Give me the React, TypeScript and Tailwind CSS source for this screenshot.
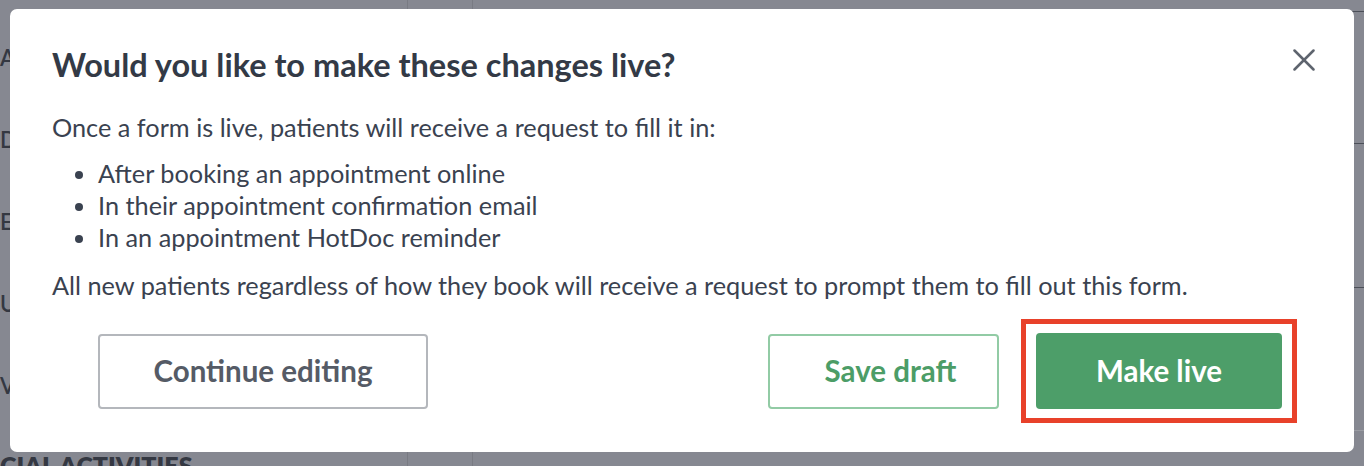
const sideLetters = ["A", "D", "E", "U", "V"];

export default function App() {
  return (
    <div
      className="relative w-[1364px] h-[466px] overflow-hidden bg-[#868891]"
      style={{ fontFamily: "Lato, 'Noto Sans', sans-serif" }}
    >
      {/* page behind the overlay */}
      <div className="flex h-full">
        <div className="flex flex-col w-[408px] border-r border-[#797b83]">
          <div className="flex flex-col gap-[62px] pt-[48px] text-[22px] font-semibold text-[#343842] leading-[20px]">
            {sideLetters.map((l) => (
              <div key={l}>{l}</div>
            ))}
          </div>
          <div className="mt-auto text-[25px] font-extrabold text-[#343842] leading-none translate-y-[12px]">
            CIAL ACTIVITIES
          </div>
        </div>
        <div className="w-[65px] border-r border-[#797b83]" />
        <div className="flex-1 flex flex-col pt-[11px]">
          <div className="h-[132px] border-t border-[#4b4f58]" />
          <div className="h-[144px] border-t border-[#4b4f58]" />
          <div className="h-[143px] border-t border-[#4b4f58]" />
          <div className="border-t border-[#9a9ca3]" />
        </div>
      </div>

      {/* modal */}
      <div className="absolute left-[10px] top-[9px] w-[1344px] h-[443px] bg-white rounded-[7px] pl-[42px] pr-[39px] pt-[36px]">
        <div className="flex items-start justify-between">
          <h2 className="text-[32.5px] leading-[40px] font-bold text-[#333a46]">
            Would you like to make these changes live?
          </h2>
          <button className="mt-[4px] text-[#5e646e]">
            <svg width="22" height="22" viewBox="0 0 22 22" fill="none" stroke="currentColor" strokeWidth="2.5" strokeLinecap="round">
              <line x1="1.5" y1="1.5" x2="20.5" y2="20.5" />
              <line x1="20.5" y1="1.5" x2="1.5" y2="20.5" />
            </svg>
          </button>
        </div>

        <div className="mt-[26px] text-[25.3px] leading-[32px] text-[#3a4250]">
          <p>Once a form is live, patients will receive a request to fill it in:</p>
          <ul className="mt-[14px] list-disc pl-[46px]">
            <li>After booking an appointment online</li>
            <li>In their appointment confirmation email</li>
            <li>In an appointment HotDoc reminder</li>
          </ul>
          <p className="mt-[16px]">
            All new patients regardless of how they book will receive a request to prompt them to fill out this form.
          </p>
        </div>

        <div className="flex items-center mt-[18px] pl-[46px] pr-[18px]">
          <button className="w-[330px] h-[75px] rounded-[4px] border-2 border-[#b4b7bc] text-[29.5px] font-bold text-[#555b66]">
            Continue editing
          </button>
          <button className="ml-auto w-[231px] h-[75px] pl-[14px] rounded-[4px] border-2 border-[#92cba5] text-[29.5px] font-bold text-[#4c9d67]">
            Save draft
          </button>
          <div className="ml-[22px] border-[5px] border-[#e8412a] px-[10px] py-[9px]">
            <button className="w-[246px] h-[76px] rounded-[4px] bg-[#4d9e69] text-[29.5px] font-bold text-white">
              Make live
            </button>
          </div>
        </div>
      </div>
    </div>
  );
}
